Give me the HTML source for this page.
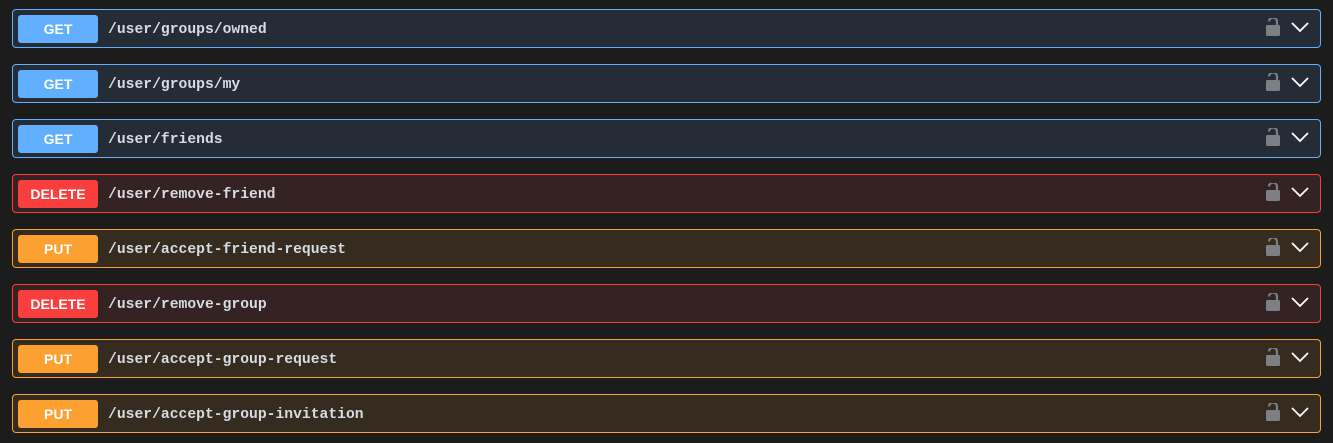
<!DOCTYPE html>
<html><head><meta charset="utf-8"><style>
html,body{margin:0;padding:0;background:#1c1c1c;width:1333px;height:443px;overflow:hidden}
.op{position:absolute;left:12px;width:1307px;height:37px;border:1px solid;border-radius:4px;box-sizing:content-box}
.get{background:#262c35;border-color:#61affe}
.del{background:#352222;border-color:#f93e3e}
.put{background:#362b1f;border-color:#fca130}
.b{position:absolute;left:5px;top:5px;width:80px;height:28px;border-radius:3px;color:#fff;font:bold 14px "Liberation Sans",sans-serif;line-height:28px;text-align:center}
.get .b{background:#61affe}.del .b{background:#f93e3e}.put .b{background:#fca130}
.p{position:absolute;left:95px;top:2px;color:#d6dbe4;font:bold 14.7px "Liberation Mono","DejaVu Sans Mono",monospace;line-height:37px}
.ic{position:absolute;left:1252px;top:8px}
</style></head><body>
<div id="w"></div>
<script>
var rows=[["get","GET","/user/groups/owned"],["get","GET","/user/groups/my"],["get","GET","/user/friends"],["del","DELETE","/user/remove-friend"],["put","PUT","/user/accept-friend-request"],["del","DELETE","/user/remove-group"],["put","PUT","/user/accept-group-request"],["put","PUT","/user/accept-group-invitation"]];
var h="";
rows.forEach(function(r,i){
h+='<div class="op '+r[0]+'" style="top:'+(9+i*55)+'px"><div class="b">'+r[1]+'</div><div class="p">'+r[2]+'</div>'+
'<svg class="ic" width="50" height="22" viewBox="0 0 50 22"><path d="M4 3.5a4 4 0 0 1 8 0V7" fill="none" stroke="#7c7f84" stroke-width="2.2"/><rect x="1" y="7" width="14" height="11" rx="1.5" fill="#7c7f84"/><path d="M27 5l8 8 8-8" fill="none" stroke="#fff" stroke-width="1.8"/></svg></div>';
});
document.getElementById("w").innerHTML=h;
</script>
</body></html>
